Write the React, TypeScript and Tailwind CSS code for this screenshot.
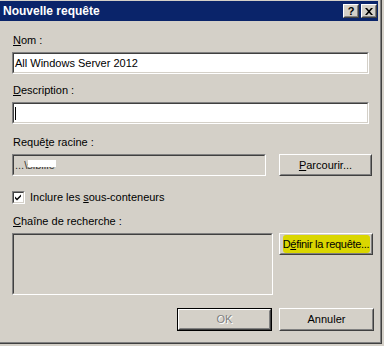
import type { FC, ReactNode } from 'react';

const Sunken: FC<{ className?: string; children?: ReactNode }> = ({ className = '', children }) => (
  <div className={`border border-t-[#808080] border-l-[#808080] border-r-white border-b-white ${className}`}>
    <div className="h-full border border-t-[#404040] border-l-[#404040] border-r-[#d4d0c8] border-b-[#d4d0c8]">
      {children}
    </div>
  </div>
);

const Raised: FC<{ className?: string; children?: ReactNode }> = ({ className = '', children }) => (
  <div className={`border border-t-white border-l-white border-r-[#404040] border-b-[#404040] ${className}`}>
    <div className="h-full flex items-center justify-center border border-t-[#d4d0c8] border-l-[#d4d0c8] border-r-[#808080] border-b-[#808080]">
      {children}
    </div>
  </div>
);

const Label: FC<{ className?: string; children: ReactNode }> = ({ className = '', children }) => (
  <div className={`ml-px h-[13px] ${className}`}>{children}</div>
);

const App: FC = () => {
  return (
    <div className="w-[384px] h-[346px] bg-[#d4d0c8] font-['Liberation_Sans',Arial,sans-serif] text-[11px] leading-[13px] text-black">
      <div className="w-[382px] h-[344px] border-r border-b border-[#404040]">
        <div className="h-full flex flex-col pt-px pr-[2px] border-r border-b border-[#808080]">
          {/* title bar */}
          <div className="h-[20px] flex items-center bg-[#0a246a] pl-[3px] pr-px">
            <span className="flex-1 pt-px text-[12px] font-bold text-white">Nouvelle requête</span>
            <Raised className="w-[16px] h-[14px] bg-[#d4d0c8]">
              <span className="text-[11px] leading-[11px] font-bold">?</span>
            </Raised>
            <Raised className="ml-[2px] w-[16px] h-[14px] bg-[#d4d0c8]">
              <svg width="8" height="7" viewBox="0 0 8 7">
                <path d="M0 0h2l2 2.2L6 0h2L5 3.5 8 7H6L4 4.8 2 7H0l3-3.5z" fill="#000" />
              </svg>
            </Raised>
          </div>

          <div className="flex flex-col pl-[12px]">
            <Label className="mt-[13px]"><u>N</u>om :</Label>
            <Sunken className="mt-[5px] w-[357px] h-[22px] bg-white">
              <div className="h-full flex items-center pl-px">All Windows Server 2012</div>
            </Sunken>

            <Label className="mt-[10px]"><u>D</u>escription :</Label>
            <Sunken className="mt-[5px] w-[357px] h-[22px] bg-white">
              <div className="h-full flex items-center pl-px">
                <div className="w-px h-[13px] bg-black" />
              </div>
            </Sunken>

            <Label className="mt-[12px]">Requê<u>t</u>e racine :</Label>
            <div className="mt-[5px] flex">
              <Sunken className="w-[254px] h-[22px]">
                <div className="h-full flex items-center pl-px text-[#333]">
                  ...\
                  <span className="relative">
                    sibille
                    <span className="absolute left-[1px] top-[1px] w-[28px] h-[7px] bg-white" />
                  </span>
                </div>
              </Sunken>
              <Raised className="ml-[13px] w-[93px] h-[22px]">
                <span><u>P</u>arcourir...</span>
              </Raised>
            </div>

            <div className="mt-[15px] flex items-center h-[13px]">
              <Sunken className="w-[13px] h-[13px] bg-white">
                <svg width="9" height="9" viewBox="0 0 9 9" className="block">
                  <path d="M1 3.5L3 5.5L7 1.5V3.5L3 7.5L1 5.5Z" fill="#000" />
                </svg>
              </Sunken>
              <span className="ml-[5px]">Inclure les <u>s</u>ous-conteneurs</span>
            </div>

            <Label className="mt-[11px]"><u>C</u>haîne de recherche :</Label>
            <div className="mt-[5px] flex items-start">
              <Sunken className="w-[261px] h-[62px]" />
              <Raised className="ml-[6px] w-[94px] h-[22px]">
                <span className="h-[18px] w-[87px] flex items-center justify-center rounded-[3px] bg-[#dad600] tracking-[-0.3px]">
                  D<u>é</u>finir la requête...
                </span>
              </Raised>
            </div>

            <div className="mt-[13px] flex justify-end gap-[7px] pr-[4px]">
              <div className="w-[95px] h-[23px] border border-black">
                <Raised className="h-full">
                  <span className="text-[#808080] [text-shadow:1px_1px_0_#fff]">OK</span>
                </Raised>
              </div>
              <Raised className="w-[95px] h-[23px]">
                <span>Annuler</span>
              </Raised>
            </div>
          </div>
        </div>
      </div>
    </div>
  );
};

export default App;
